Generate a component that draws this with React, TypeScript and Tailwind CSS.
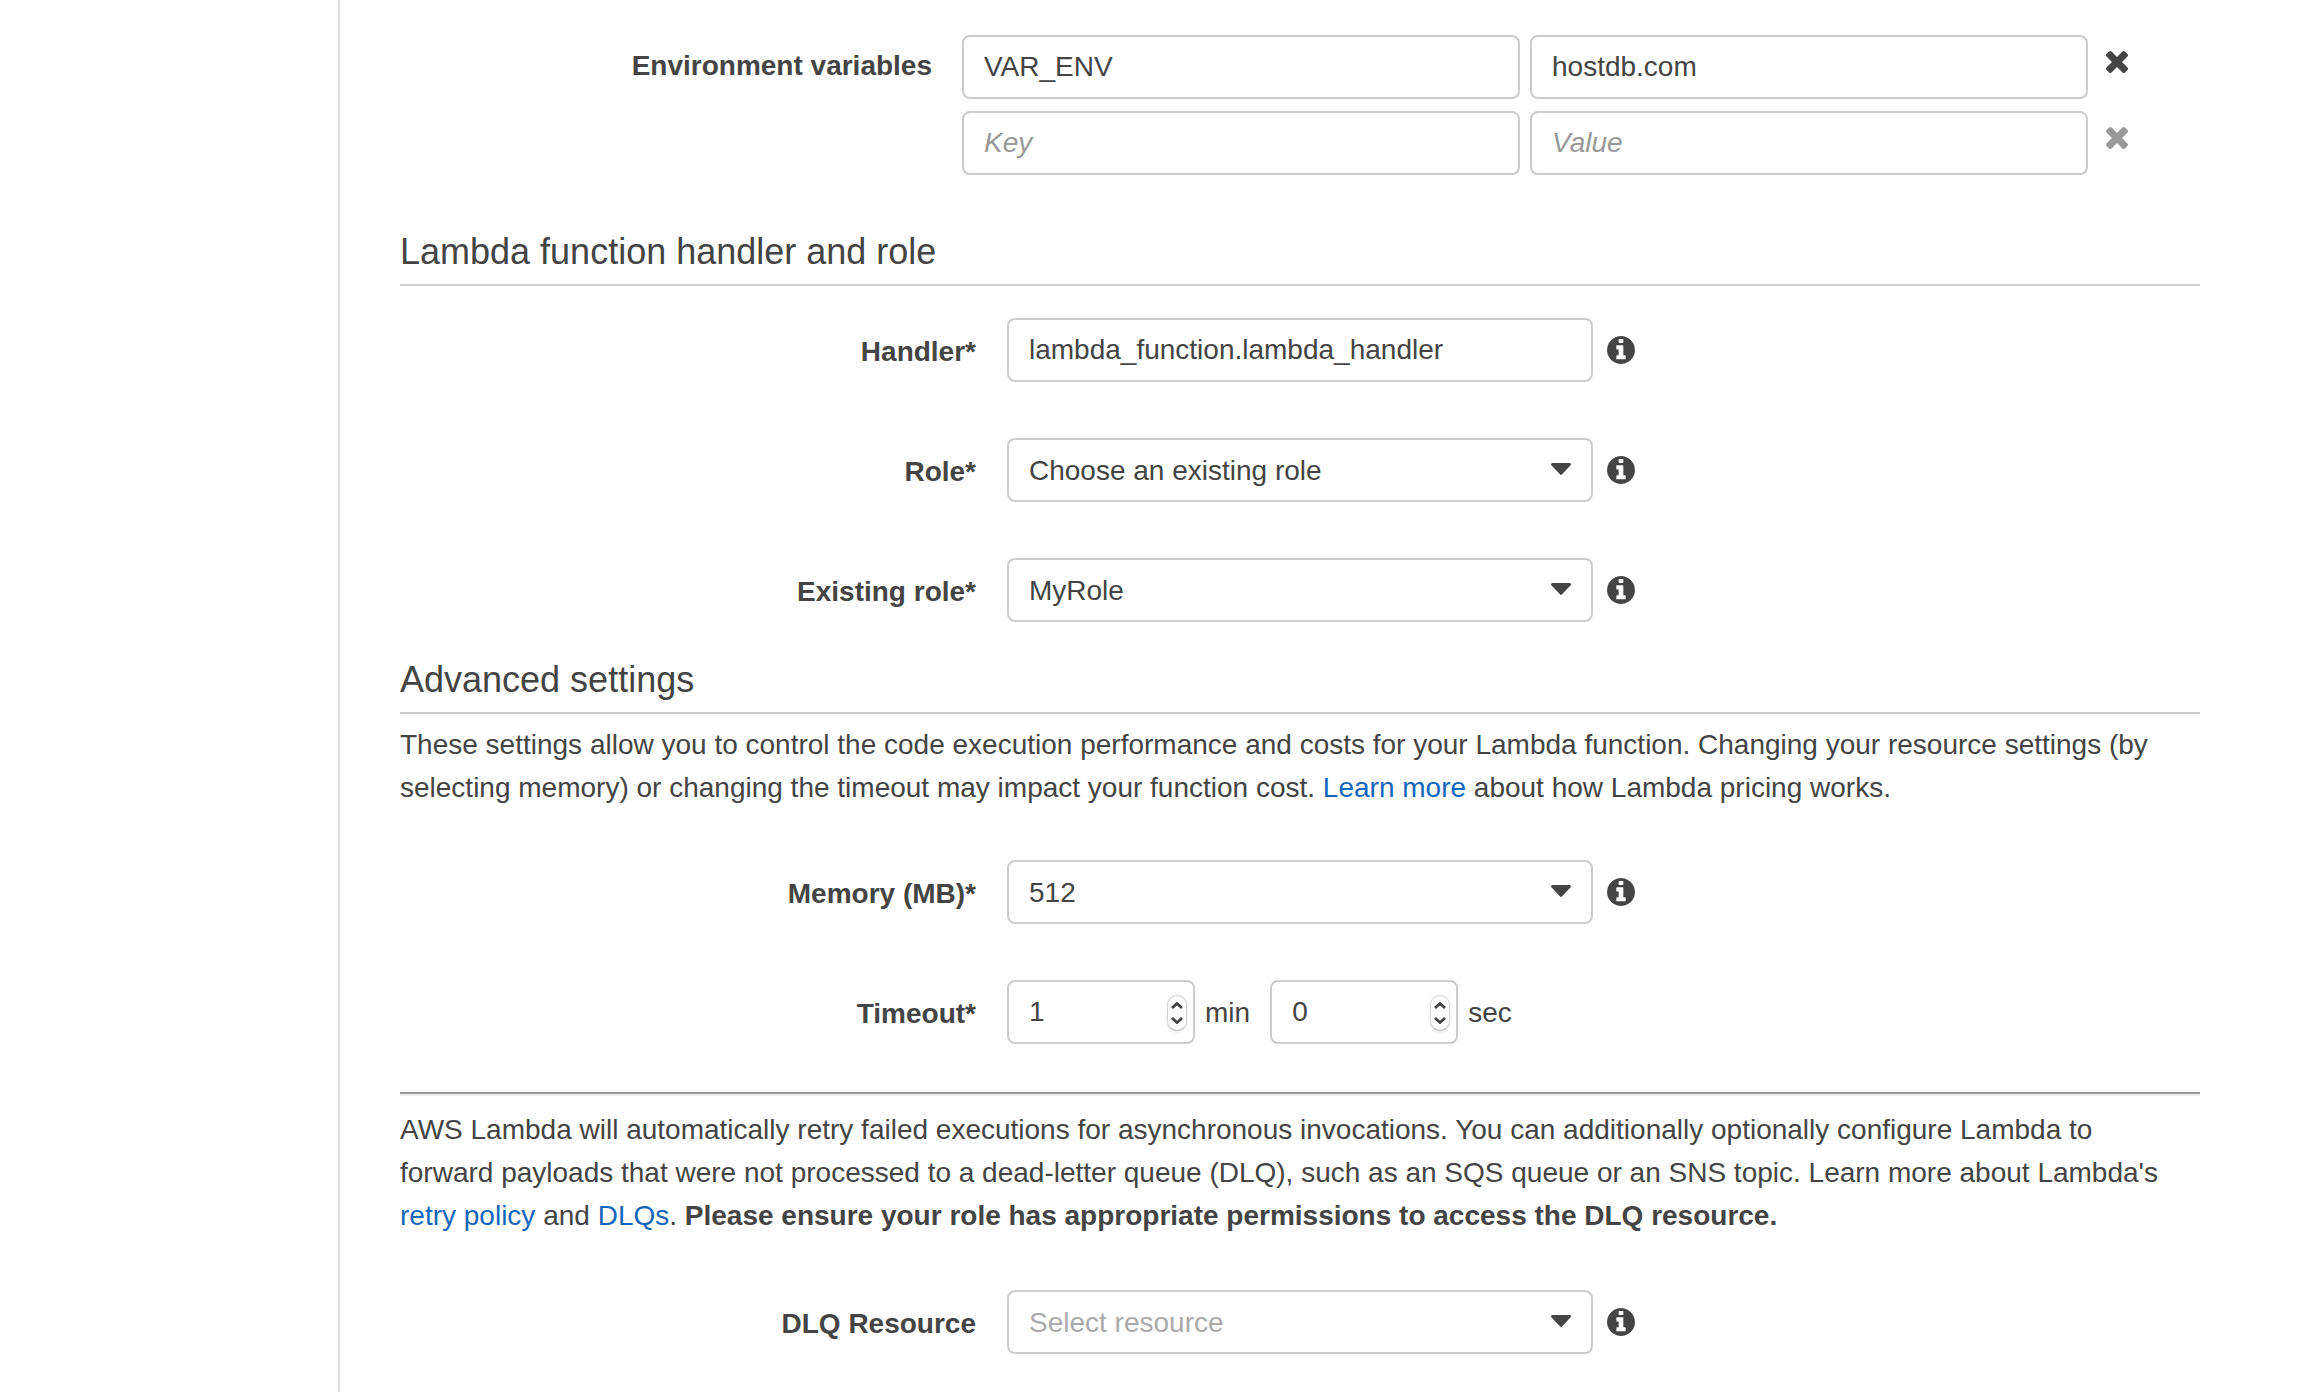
import { useState } from "react";
import type { ReactNode } from "react";

const field =
  "block h-16 w-full min-w-0 rounded-lg border-2 border-[#ccc] bg-white px-5 text-[28px] leading-[43px] outline-none";

function TimesIcon() {
  return (
    <svg viewBox="302 366 1188 1188" className="size-[22px]" fill="currentColor" aria-hidden="true">
      <path d="M1490 1322q0 40-28 68l-136 136q-28 28-68 28t-68-28l-294-294-294 294q-28 28-68 28t-68-28l-136-136q-28-28-28-68t28-68l294-294-294-294q-28-28-28-68t28-68l136-136q28-28 68-28t68 28l294 294 294-294q28-28 68-28t68 28l136 136q28 28 28 68t-28 68l-294 294 294 294q28 28 28 68z" />
    </svg>
  );
}

function InfoButton({ topic }: { topic: string }) {
  return (
    <button type="button" aria-label={`About ${topic}`} className="shrink-0">
      <svg viewBox="128 128 1536 1536" className="size-7" fill="currentColor" aria-hidden="true">
        <path d="M1152 1376v-160q0-14-9-23t-23-9h-96v-512q0-14-9-23t-23-9h-320q-14 0-23 9t-9 23v160q0 14 9 23t23 9h96v320h-96q-14 0-23 9t-9 23v160q0 14 9 23t23 9h448q14 0 23-9t9-23zM1024 480v-160q0-14-9-23t-23-9h-192q-14 0-23 9t-9 23v160q0 14 9 23t23 9h192q14 0 23-9t9-23zM1664 896q0 209-103 385.500t-279.500 279.500-385.500 103-385.500-103-279.500-279.500-103-385.500 103-385.500 279.500-279.500 385.500-103 385.500 103 279.500 279.500 103 385.500z" />
      </svg>
    </button>
  );
}

function FormRow({ id, label, children }: { id: string; label: string; children: ReactNode }) {
  return (
    <div className="flex">
      <label htmlFor={id} className="w-[32%] shrink-0 pt-1 text-right leading-[60px] font-bold">
        {label}
      </label>
      <div className="ml-[31px] flex min-w-0 flex-1 items-center">{children}</div>
    </div>
  );
}

function SelectRow({
  id,
  label,
  options,
  muted = false,
}: {
  id: string;
  label: string;
  options: string[];
  muted?: boolean;
}) {
  return (
    <FormRow id={id} label={label}>
      <div className="relative mr-3.5 w-full max-w-[586px]">
        <select id={id} className={`${field} appearance-none ${muted ? "text-[#aaa]" : "text-[#444]"}`}>
          {options.map((option) => (
            <option key={option}>{option}</option>
          ))}
        </select>
        <svg
          viewBox="384 640 1024 576"
          className="pointer-events-none absolute top-[25px] right-[22px] h-3 w-5"
          preserveAspectRatio="none"
          fill="currentColor"
          aria-hidden="true"
        >
          <path d="M1408 704q0 26-19 45l-448 448q-19 19-45 19t-45-19l-448-448q-19-19-19-45t19-45 45-19h896q26 0 45 19t19 45z" />
        </svg>
      </div>
      <InfoButton topic={label.replace("*", "")} />
    </FormRow>
  );
}

function NumberField({ id, label, initial }: { id: string; label: string; initial: number }) {
  const [value, setValue] = useState(initial);
  return (
    <div className="relative w-[188px]">
      <input
        id={id}
        type="number"
        min={0}
        aria-label={label}
        value={value}
        onChange={(e) => setValue(Number(e.target.value))}
        className={`${field} [appearance:textfield] [&::-webkit-inner-spin-button]:appearance-none`}
      />
      <div className="absolute top-[15px] right-2 flex h-9 w-5 flex-col overflow-hidden rounded-full border border-[#d4d4d4] border-b-[#bbb] bg-white shadow-sm">
        <button
          type="button"
          aria-label={`Increase ${label}`}
          onClick={() => setValue(value + 1)}
          className="flex flex-1 items-end justify-center pb-1"
        >
          <svg viewBox="0 0 12 7" className="h-[7px] w-3" fill="none" stroke="currentColor" strokeWidth="2.8" aria-hidden="true">
            <path d="M1 6 6 1.500 11 6" />
          </svg>
        </button>
        <button
          type="button"
          aria-label={`Decrease ${label}`}
          onClick={() => setValue(Math.max(0, value - 1))}
          className="flex flex-1 items-start justify-center pt-1"
        >
          <svg viewBox="0 0 12 7" className="h-[7px] w-3" fill="none" stroke="currentColor" strokeWidth="2.8" aria-hidden="true">
            <path d="M1 1 6 5.500 11 1" />
          </svg>
        </button>
      </div>
    </div>
  );
}

function VariableRow({ id, name, value }: { id: string; name: string; value: string }) {
  return (
    <div className="flex items-start">
      <input
        id={id}
        aria-label="Key"
        placeholder="Key"
        defaultValue={name}
        className={`${field} mr-2.5 flex-1 placeholder:text-[#999] placeholder:italic`}
      />
      <input
        aria-label="Value"
        placeholder="Value"
        defaultValue={value}
        className={`${field} mr-[18px] flex-1 placeholder:text-[#999] placeholder:italic`}
      />
      <button type="button" aria-label="Remove variable" className={`mt-4 shrink-0 ${name ? "" : "text-[#999]"}`}>
        <TimesIcon />
      </button>
    </div>
  );
}

function SectionHeading({ children }: { children: ReactNode }) {
  return <h2 className="border-b-2 border-[#ccc] pb-2.5 text-4xl leading-[45px]">{children}</h2>;
}

function TextLink({ children }: { children: ReactNode }) {
  return (
    <a href="#" className="text-[#1166bb]">
      {children}
    </a>
  );
}

export default function App() {
  return (
    <div className="flex min-h-screen bg-white font-['Helvetica_Neue','Liberation_Sans',sans-serif] text-[28px] leading-[43px] text-[#444]">
      <aside className="w-[340px] shrink-0 border-r-2 border-[#ddd]" />
      <main className="min-w-0 flex-1 pt-[35px] pr-28 pb-[38px] pl-[60px]">
        <section className="flex">
          <label htmlFor="env-key-0" className="w-[532px] shrink-0 pt-[9px] text-right font-bold">
            Environment variables
          </label>
          <div className="mr-[72px] ml-[30px] flex min-w-0 flex-1 flex-col gap-3">
            <VariableRow id="env-key-0" name="VAR_ENV" value="hostdb.com" />
            <VariableRow id="env-key-1" name="" value="" />
          </div>
        </section>

        <section className="mt-[54px]">
          <SectionHeading>Lambda function handler and role</SectionHeading>
          <div className="mt-8 flex flex-col gap-14">
            <FormRow id="handler" label="Handler*">
              <div className="mr-3.5 w-full max-w-[586px]">
                <input id="handler" defaultValue="lambda_function.lambda_handler" className={field} />
              </div>
              <InfoButton topic="Handler" />
            </FormRow>
            <SelectRow id="role" label="Role*" options={["Choose an existing role"]} />
            <SelectRow id="existing-role" label="Existing role*" options={["MyRole"]} />
          </div>
        </section>

        <section className="mt-[35px]">
          <SectionHeading>Advanced settings</SectionHeading>
          <p className="mt-[9px] pr-4">
            These settings allow you to control the code execution performance and costs for your Lambda function.
            Changing your resource settings (by selecting memory) or changing the timeout may impact your function
            cost. <TextLink>Learn more</TextLink> about how Lambda pricing works.
          </p>
          <div className="mt-[51px] flex flex-col gap-14">
            <SelectRow id="memory" label="Memory (MB)*" options={["512"]} />
            <FormRow id="timeout-min" label="Timeout*">
              <NumberField id="timeout-min" label="Timeout minutes" initial={1} />
              <span className="mr-5 ml-2.5">min</span>
              <NumberField id="timeout-sec" label="Timeout seconds" initial={0} />
              <span className="ml-2.5">sec</span>
            </FormRow>
          </div>
        </section>

        <section className="mt-12">
          <hr className="h-1 border-t-2 border-b-2 border-t-[#999] border-b-[#eee]" />
          <p className="mt-3 pr-4">
            AWS Lambda will automatically retry failed executions for asynchronous invocations. You can additionally
            optionally configure Lambda to forward payloads that were not processed to a dead-letter queue (DLQ), such
            as an SQS queue or an SNS topic. Learn more about Lambda's <TextLink>retry policy</TextLink> and{" "}
            <TextLink>DLQs</TextLink>. <strong>Please ensure your role has appropriate permissions to access the DLQ resource.</strong>
          </p>
          <div className="mt-[53px]">
            <SelectRow id="dlq" label="DLQ Resource" options={["Select resource"]} muted />
          </div>
        </section>
      </main>
    </div>
  );
}
